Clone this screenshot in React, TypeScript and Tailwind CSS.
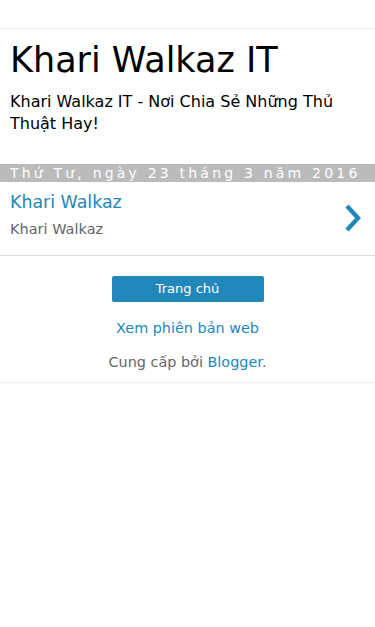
import React from 'react';

const App: React.FC = () => {
  return (
    <div className="min-h-screen bg-white text-black" style={{ fontFamily: '"DejaVu Sans", sans-serif' }}>
      <div className="h-[29px] border-b border-[#eeeeee]" />

      <header className="px-[10px] pt-[10px]">
        <h1 className="text-[35px] leading-[42px] font-normal">Khari Walkaz IT</h1>
        <p className="mt-[10px] text-[16px] leading-[22px]">Khari Walkaz IT - Nơi Chia Sẻ Những Thủ Thuật Hay!</p>
      </header>

      <div className="mt-[29px]">
        <div className="bg-[#bbbbbb] text-white text-[14px] leading-[18px] tracking-[3.2px] px-[10px] whitespace-nowrap overflow-hidden">
          Thứ Tư, ngày 23 tháng 3 năm 2016
        </div>
        <div className="flex items-center justify-between border-b border-[#dddddd] px-[10px] pt-[9px] pb-[17px]">
          <div>
            <div className="text-[17.4px] leading-[22px] text-[#2288bb]">Khari Walkaz</div>
            <div className="mt-[7px] text-[14.5px] leading-[18px] text-[#666666]">Khari Walkaz</div>
          </div>
          <svg width="16" height="28" viewBox="0 0 16 28" className="mr-[4px] mt-[6px]">
            <path d="M2 2 L13 14 L2 26" fill="none" stroke="#2288bb" strokeWidth="4.4" strokeLinejoin="miter" />
          </svg>
        </div>
      </div>

      <div className="flex flex-col items-center border-b border-[#eeeeee] pb-[11px]">
        <a className="mt-[20px] w-[152px] h-[26px] rounded-[2px] bg-[#2288bb] text-white text-[13px] flex items-center justify-center">
          Trang chủ
        </a>
        <a className="mt-[17px] text-[14.4px] leading-[18px] text-[#2288bb]">Xem phiên bản web</a>
        <div className="mt-[16px] text-[14.4px] leading-[18px] text-[#666666]">
          Cung cấp bởi <a className="text-[#2288bb]">Blogger</a>.
        </div>
      </div>
    </div>
  );
};

export default App;
